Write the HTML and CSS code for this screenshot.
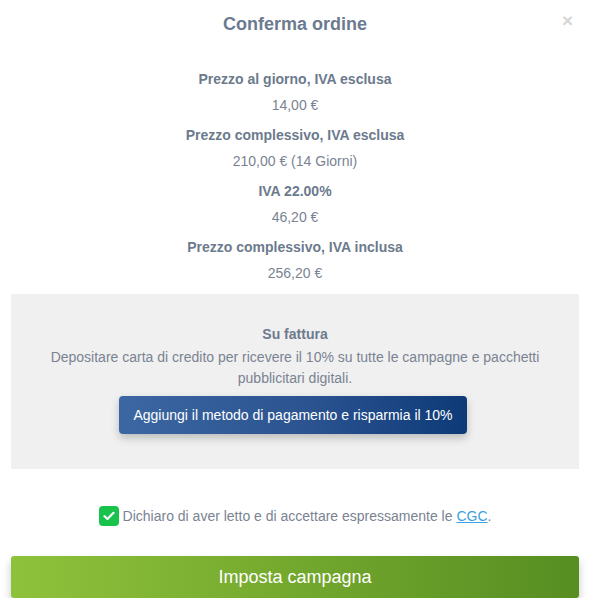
FILE: index.html
```html
<!DOCTYPE html>
<html lang="it">
<head>
<meta charset="utf-8">
<title>Conferma ordine</title>
<link rel="stylesheet" href="styles.css">
</head>
<body>
<div class="modal">
  <header class="modal-header">
    <h1 class="title">Conferma ordine</h1>
    <button class="close" aria-label="Chiudi">&times;</button>
  </header>
  <dl class="summary">
    <dt>Prezzo al giorno, IVA esclusa</dt>
    <dd>14,00 €</dd>
    <dt>Prezzo complessivo, IVA esclusa</dt>
    <dd>210,00 € (14 Giorni)</dd>
    <dt>IVA 22.00%</dt>
    <dd>46,20 €</dd>
    <dt>Prezzo complessivo, IVA inclusa</dt>
    <dd>256,20 €</dd>
  </dl>
  <section class="invoice">
    <div class="invoice-title">Su fattura</div>
    <p class="invoice-text">Depositare carta di credito per ricevere il 10% su tutte le campagne e pacchetti pubblicitari digitali.</p>
    <button class="btn-pay">Aggiungi il metodo di pagamento e risparmia il 10%</button>
  </section>
  <label class="terms">
    <span class="check"><svg width="12" height="10" viewBox="0 0 12 10"><path d="M1.5 5.2 L4.5 8 L10.5 1.8" fill="none" stroke="#fff" stroke-width="2.2" stroke-linecap="round" stroke-linejoin="round"/></svg></span>
    <span>Dichiaro di aver letto e di accettare espressamente le <a href="#" class="link">CGC</a>.</span>
  </label>
  <button class="btn-submit">Imposta campagna</button>
</div>
</body>
</html>
```
FILE: styles.css
```css
* { box-sizing: border-box; }
html, body { margin: 0; padding: 0; background: #fff; }
body {
  font-family: "Liberation Sans", Arial, sans-serif;
  color: #6c7a8d;
}
.modal {
  width: 593px;
  padding: 0 14px 0 11px;
}
.modal-header {
  position: relative;
  padding-top: 13px;
  height: 71px;
}
.title {
  margin: 0;
  text-align: center;
  font-size: 18px;
  line-height: 22px;
  font-weight: bold;
  color: #6c7a8f;
}
.close {
  position: absolute;
  right: 2px;
  top: 10px;
  border: 0;
  background: none;
  font-family: "Liberation Sans", Arial, sans-serif;
  font-size: 19px;
  font-weight: bold;
  line-height: 22px;
  color: #d6d6d6;
  padding: 0 4px;
}
.summary {
  margin: 0;
  text-align: center;
  font-size: 14px;
}
.summary dt {
  font-weight: bold;
  line-height: 16px;
  color: #6c7a8d;
}
.summary dd {
  margin: 10px 0 14px;
  line-height: 16px;
  color: #7a8392;
}
.summary dd:last-child { margin-bottom: 0; }
.invoice {
  margin-top: 13px;
  background: #f0f0f0;
  height: 175px;
  padding: 32px 20px 0;
  text-align: center;
  font-size: 14px;
}
.invoice-title {
  font-weight: bold;
  line-height: 16px;
  color: #6c7a8d;
}
.invoice-text {
  margin: 5px 0 0;
  line-height: 21px;
  color: #7a8392;
}
.btn-pay {
  margin-top: 7px;
  margin-right: 4px;
  height: 38px;
  padding: 0 14px;
  border: 0;
  border-radius: 4px;
  background: linear-gradient(90deg, #3c67a2 0%, #2a5390 55%, #0e3a78 100%);
  color: #fff;
  font-family: "Liberation Sans", Arial, sans-serif;
  font-size: 14px;
  box-shadow: 0 4px 8px rgba(0, 0, 0, 0.22);
}
.terms {
  display: flex;
  align-items: center;
  justify-content: center;
  gap: 4px;
  margin-top: 37px;
  font-size: 14px;
  color: #7a8392;
  line-height: 20px;
}
.check {
  width: 20px;
  height: 20px;
  border-radius: 4px;
  background: #19c24a;
  display: inline-flex;
  align-items: center;
  justify-content: center;
}
.link {
  color: #3aa0e3;
  text-decoration: underline;
}
.btn-submit {
  display: block;
  width: 100%;
  margin-top: 30px;
  height: 42px;
  border: 0;
  border-radius: 3px;
  background: linear-gradient(90deg, #8fc23b 0%, #76ab2f 45%, #568e22 100%);
  color: #fff;
  font-family: "Liberation Sans", Arial, sans-serif;
  font-size: 18px;
  box-shadow: 0 5px 9px rgba(0, 0, 0, 0.22);
}
```
